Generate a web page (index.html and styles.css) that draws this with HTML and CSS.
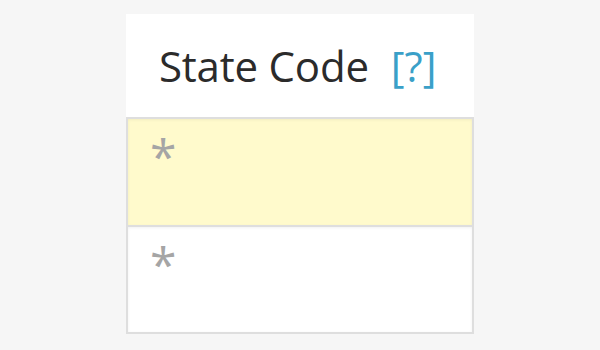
FILE: index.html
```html
<!DOCTYPE html>
<html>
<head>
<meta charset="utf-8">
<link rel="stylesheet" href="styles.css">
</head>
<body>
<div class="card">
  <div class="header">
    <span class="title">State Code</span>
    <span class="help">[?]</span>
  </div>
  <div class="field field-active"><span class="req">*</span></div>
  <div class="field"><span class="req">*</span></div>
</div>
</body>
</html>
```
FILE: styles.css
```css
html, body {
  margin: 0;
  padding: 0;
  background: #f6f6f6;
  font-family: "Open Sans", "Liberation Sans", sans-serif;
}
body {
  padding-top: 14px;
  display: flex;
  justify-content: center;
}
.card {
  width: 348px;
  background: #ffffff;
  display: flex;
  flex-direction: column;
}
.header {
  height: 103px;
  display: flex;
  align-items: center;
  padding-left: 33px;
  gap: 22px;
  box-sizing: border-box;
}
.title {
  font-size: 42px;
  color: #2b2b2b;
  letter-spacing: -0.2px;
}
.help {
  font-size: 42px;
  color: #3aa0c8;
}
.field {
  height: 108px;
  border: 2px solid #dedede;
  box-sizing: border-box;
  background: #ffffff;
  padding: 13px 0 0 22px;
  box-shadow: inset 0 1px 3px rgba(0,0,0,0.06);
}
.field + .field {
  border-top: none;
  height: 107px;
}
.field-active {
  background: #fffacc;
  height: 110px;
}
.req {
  font-size: 48px;
  line-height: 1;
  color: #a5a5a5;
}
```
